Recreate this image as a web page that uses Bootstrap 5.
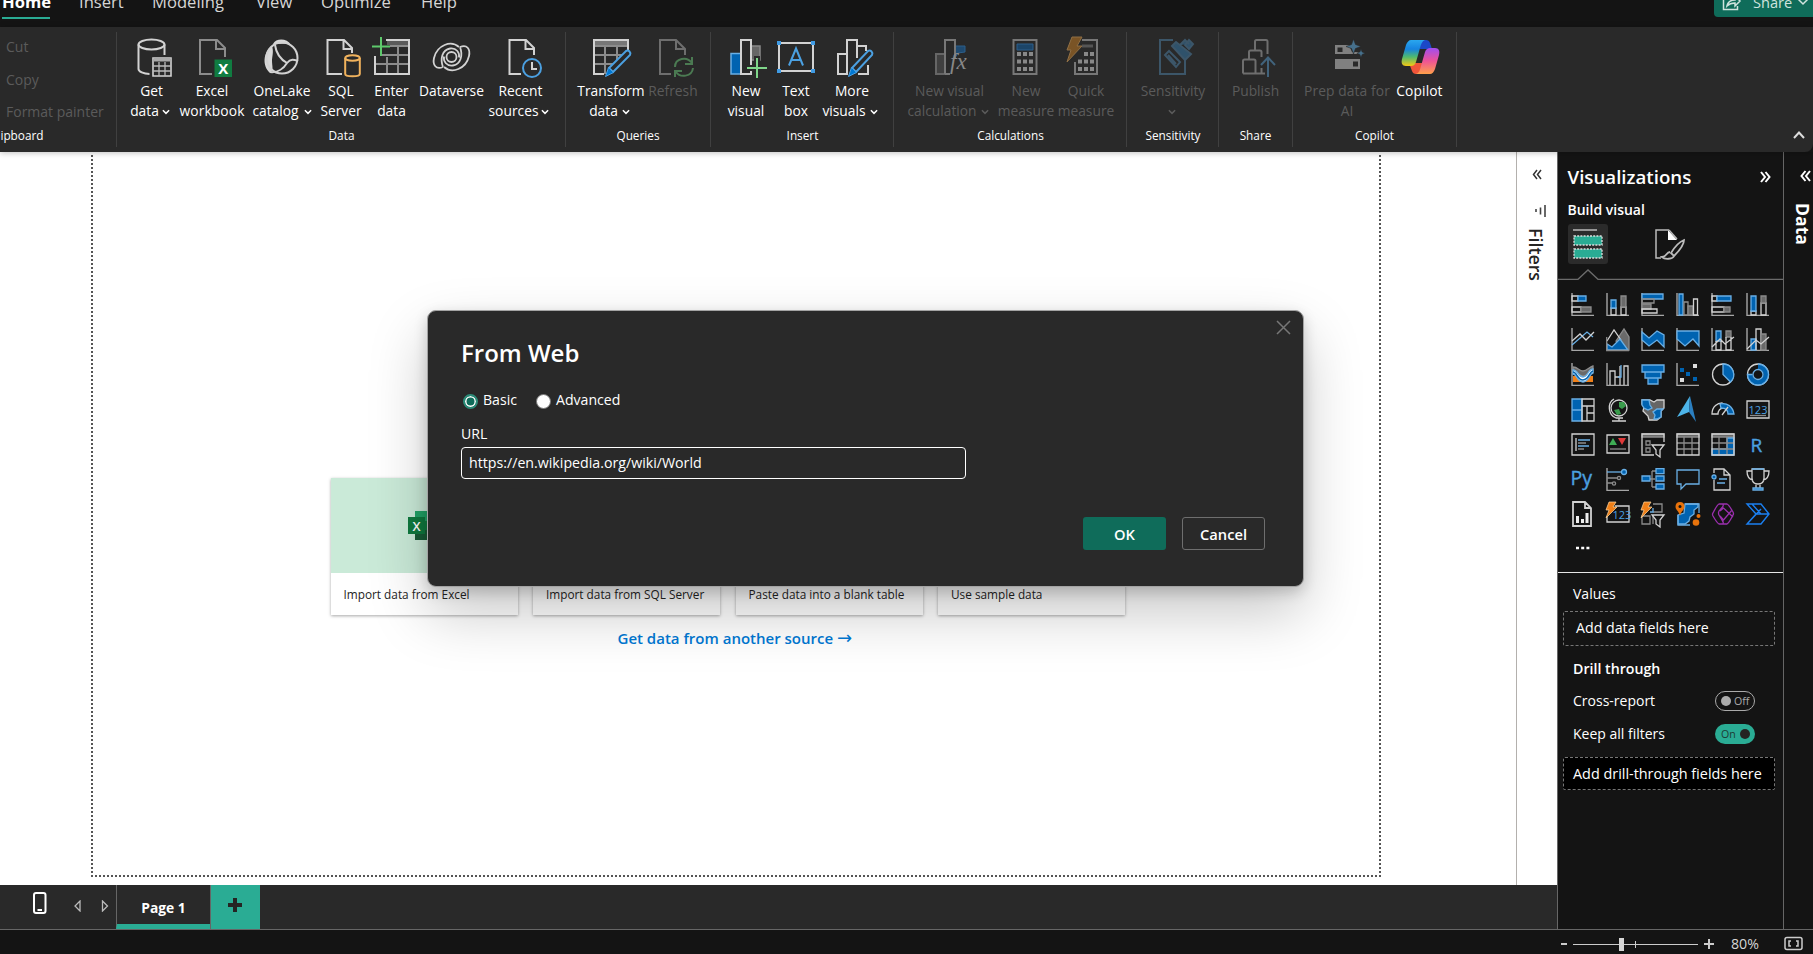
<!DOCTYPE html>
<html lang="en">
<head>
<meta charset="utf-8">
<title>Report editor</title>
<meta name="viewport" content="width=device-width, initial-scale=1">
<link href="https://cdn.jsdelivr.net/npm/bootstrap@5.3.0/dist/css/bootstrap.min.css" rel="stylesheet">
<style>
:root{--ink:#141414;--panel:#292929;--teal:#2aac94;--line:#666}
body{font-family:"Open Sans","Noto Sans",sans-serif;font-size:13.8px;line-height:20px;background:#fff;color:#fff;width:1813px;height:954px;overflow:hidden}
svg{display:block;flex:none;fill:none}
.tabstrip{height:27px;background:var(--ink);font-size:16.6px}
.tabstrip .tab{position:relative;line-height:22px;height:20px;margin-top:-9px;color:#d6d6d6}
.tabstrip .tab.active{color:#fff;font-weight:700;height:28px;border-bottom:2px solid var(--teal)}
.share{width:99px;height:17px;background:#0f6c5a;border-radius:0 0 0 4px;color:#cfe3de;font-size:14.6px;overflow:hidden}
.ribbon{height:125px;background:var(--panel);border-bottom-right-radius:8px}
.ribbon-wrap{background:var(--ink);position:relative;z-index:1;box-shadow:0 1px 6px rgba(0,0,0,.25)}
.rgroup{position:relative;padding-top:10px}
.rgroup::after{content:"";position:absolute;right:0;top:5px;width:1px;height:115px;background:#404040}
.rgroup .cap{font-size:11.8px;line-height:16px;height:26px}
.rbtn{height:90px;white-space:nowrap;text-align:center}
.rbtn svg{margin:0 auto 4px;width:40px;height:40px;overflow:visible}
.rbtn svg.chev,.chev{display:inline-block;width:8px;height:6px;margin:0 0 0 3px;stroke:currentColor;stroke-width:1.7}
.off{color:#5b5b5b}
.clip div{line-height:20px;font-size:14px}
.stage{height:733px}
.canvas-col{width:1516px;background:#fff}
.page-frame{margin-left:91px;width:1290px;height:722px;border:2px dotted #555;border-top:0;margin-top:3px}
.tile{width:187px;height:137px;background:#fff;color:#252423;font-size:11.8px;font-weight:500;box-shadow:0 1px 3px rgba(0,0,0,.35)}
.tile .art{height:95px}
.tile .ttl{padding:11px 0 0 13px;line-height:20px}
.dlg{position:absolute;left:427px;top:310px;width:877px;height:277px;background:var(--panel);border:1px solid #a3a3a3;border-radius:9px;box-shadow:0 26px 58px rgba(0,0,0,.22),0 5px 14px rgba(0,0,0,.18);padding:28px 33px;font-size:14.1px}
.dlg h1{font-size:24px;line-height:28px;font-weight:600;margin:0}
.dlg .x{position:absolute;right:12px;top:9px}
.rad{width:15px;height:15px;border-radius:50%;background:#fff;border:1px solid #767676}
.rad.on{background:#0f6c5a;border:2px solid #2b8a77;box-shadow:inset 0 0 0 1.5px #fff}
.urlbox{width:505px;height:32px;border:1.5px solid #fff;border-radius:4px;padding:5px 6px 5px 7px;font-size:14.2px}
.dbtn{width:83px;height:33px;border-radius:3px;font-weight:600;font-size:14.7px;line-height:20px;padding:0;color:#fff}
.filters{width:41px;background:#fff;border-left:1px solid #b3b0ad;color:#252423}
.vert{writing-mode:vertical-rl;font-weight:600}
.vis{width:226px;background:var(--ink);border-left:1px solid var(--line);font-size:14px}
.datap{width:30px;background:var(--ink);border-left:1px solid var(--line)}
.vgrid{display:grid;grid-template-columns:repeat(6,35px);grid-auto-rows:35px;padding:13px 0 0 12.5px}
.vgrid svg{width:24px;height:24px;overflow:visible}
.drop{width:212px;border:1px dashed #767676;border-radius:2px;margin-left:5px}
.tog{width:40px;height:20px;border-radius:10px;font-size:10.6px;line-height:18px}
.pagebar{width:1557px;height:44px;background:var(--panel)}
.bottom{background:var(--ink);border-top:1px solid var(--line);height:25px}
/* shared icon strokes */
.w{stroke:#d2d2d2;stroke-width:2}.g{stroke:#8c8c8c;stroke-width:2}.gf{fill:#6a6a6a}.b{stroke:#4ba0e1;stroke-width:2}.bf{fill:#0063b1}
.vgrid .w{stroke-width:1.3}.vgrid .g{stroke-width:1.3}.vgrid .b{stroke-width:1.3;stroke:#69afe5}
</style>
<script src="https://cdn.jsdelivr.net/npm/bootstrap@5.3.0/dist/js/bootstrap.bundle.min.js"></script>
</head>
<body>
<svg width="0" height="0" class="position-absolute">
<defs>
<symbol id="chev" viewBox="0 0 9 6"><path d="M1 1l3.5 3.5L8 1"/></symbol>
<symbol id="axes" viewBox="0 0 24 24"><path d="M1 0v22.4h22" stroke="#a6a6a6" stroke-width="1.4"/></symbol>
<linearGradient id="c1" x1="0" y1="0" x2="0" y2="1"><stop offset="0" stop-color="#2aa7ee"/><stop offset=".35" stop-color="#1683e0"/><stop offset=".65" stop-color="#4fba6f"/><stop offset="1" stop-color="#f4c914"/></linearGradient>
<linearGradient id="c2" x1="0" y1="0" x2="0" y2="1"><stop offset="0" stop-color="#a04df0"/><stop offset=".5" stop-color="#ee5396"/><stop offset="1" stop-color="#ffa04a"/></linearGradient>
</defs>
</svg>

<nav class="tabstrip d-flex align-items-start">
  <div class="tab active" style="margin-left:2px;width:48px">Home</div>
  <div class="tab" style="margin-left:29px;width:73px">Insert</div>
  <div class="tab" style="width:104px">Modeling</div>
  <div class="tab" style="width:65px">View</div>
  <div class="tab" style="width:100px">Optimize</div>
  <div class="tab">Help</div>
  <div class="share ms-auto d-flex">
    <svg width="20" height="14" style="margin-left:8px" stroke="#cfe3de" stroke-width="1.5"><path d="M6-3H1.500V9.500h14V6M5 6c1-5 4-6 8-6v-4l5 5-5 5V3C9 3 7 4 5 6z"/></svg>
    <span style="margin:-8px 0 0 11px">Share</span>
    <svg width="12" height="8" style="margin-left:5px" stroke="#cfe3de" stroke-width="1.5"><path d="M1-1l5 5 5-5"/></svg>
  </div>
</nav>

<div class="ribbon-wrap">
<div class="ribbon d-flex">
  <div class="rgroup clip" style="width:117px">
    <div class="off d-flex flex-column" style="height:90px;padding-left:6px;white-space:nowrap"><div>Cut</div><div style="margin-top:13px">Copy</div><div style="margin-top:12px">Format painter</div></div>
    <div class="cap" style="margin-left:-10px;font-size:11.8px;line-height:16px">Clipboard</div>
  </div>

  <div class="rgroup" style="width:449px">
    <div class="d-flex" style="padding-left:11px">
      <div class="rbtn" style="width:47px">
        <svg viewBox="0 0 40 40"><g class="w"><ellipse cx="19.500" cy="7.500" rx="13" ry="5"/><path d="M6.500 7.500V32c0 2.500 5 5 11 5M32.500 7.500V18"/></g><path d="M21 21h18v18H21z" stroke="#d2d2d2" stroke-width="1.600"/><path d="M21 23h18" stroke="#aaa" stroke-width="3"/><path d="M21 29h18M21 34h18M27 25v14M33 25v14" stroke="#bbb" stroke-width="1.300"/></svg>
        Get<br><span style="margin-left:-3px">data</span><svg class="chev"><use href="#chev"/></svg></div>
      <div class="rbtn" style="width:74px">
        <svg viewBox="0 0 40 40"><path class="g" d="M20 37H8V3h17l8 8v9M24 3v9h9"/><path fill="#107c41" d="M22.500 22.500H40V40H22.500z"/><text x="31.200" y="36.500" text-anchor="middle" font-size="15" font-weight="700" fill="#fff">X</text></svg>
        Excel<br><span style="letter-spacing:.1px">workbook</span></div>
      <div class="rbtn" style="width:66px">
        <svg viewBox="0 0 40 40"><path fill="#d8d8d8" d="M11 7c3-6 14-6 18 1-6-2-12-1-18-1zM10 9c-9 6-10 20-2 27 4-2 2-7 2-12s2-9 0-15z"/><circle cx="20" cy="21" r="15.500" class="w"/><path class="w" d="M13 8c1 7 5 14 12 18 4-5 8-3 11-2M8 35c8 1 14-4 17-9"/></svg>
        OneLake<br>catalog<svg class="chev" style="margin-left:5px"><use href="#chev"/></svg></div>
      <div class="rbtn" style="width:52px">
        <svg viewBox="0 0 40 40"><path class="w" d="M21 37H6.500V3H23l8 8v5M22.500 3v9H31"/><g stroke="#f0b25d" stroke-width="2"><ellipse cx="31.500" cy="21" rx="7.300" ry="2.800"/><path d="M24.200 21v16c0 3 14.600 3 14.600 0V21"/></g></svg>
        SQL<br>Server</div>
      <div class="rbtn" style="width:49px">
        <svg viewBox="0 0 40 40"><path fill="#5a5a5a" d="M15 3h22v5H15z"/><path class="g" d="M3 27h34M10 18h27M15 20v17M26 9v28M18 9h19"/><path class="w" d="M14 3h23v34H3V19"/><path stroke="#5ec96c" stroke-width="2" d="M9 0v19M0 9.500h18"/></svg>
        Enter<br>data</div>
      <div class="rbtn" style="width:71px">
        <svg viewBox="0 0 40 40"><g class="w" style="stroke-width:1.800"><circle cx="19.500" cy="20" r="5"/><path d="M27 10C19 3 5 8 2 21c-1.500 7 2 12 9 9M12 30C20 37 34 32 37 19c1.500-7-2-12-9-9M11 30c-3-8-1-17 7-18.500 6-1 10 4 9 9M28 10c3 8 1 17-7 18.500-6 1-10-4-9-9"/></g></svg>
        Dataverse</div>
      <div class="rbtn" style="width:67px">
        <svg viewBox="0 0 40 40"><path class="w" d="M20 37H8.500V3H25l8 8v7M24.500 3v9H33"/><circle cx="31" cy="31" r="9" class="b"/><path class="w" d="M31 25v7h5"/></svg>
        Recent<br><span style="margin-left:-3px">sources</span><svg class="chev"><use href="#chev"/></svg></div>
    </div>
    <div class="cap text-center">Data</div>
  </div>

  <div class="rgroup" style="width:145px">
    <div class="d-flex" style="padding-left:9px">
      <div class="rbtn" style="width:72px">
        <svg viewBox="0 0 40 40"><path fill="#777" d="M3 3h34v5H3z"/><path class="g" d="M3 9h34M3 18h28M3 27h20M14 9v28M26 9v14"/><path class="w" d="M37 14V3H3v34h10"/><path fill="#292929" stroke="#4ba0e1" stroke-width="2" d="M18 31L35 14q2-1 3.500.5t.5 3.500L22 35z"/><path fill="#0078d4" stroke="#4ba0e1" d="M14.500 39.500l3-9 5 5z"/></svg>
        Transform<br><span style="margin-left:-3px">data</span><svg class="chev" style="margin-left:4px"><use href="#chev"/></svg></div>
      <div class="rbtn off" style="width:52px">
        <svg viewBox="0 0 40 40"><path stroke="#6e6e6e" stroke-width="2" d="M18 37H7V3h16l9 9v6M23 3v9h9"/><path stroke="#4b7a52" stroke-width="2" d="M22 30c0-9 12-11 17-4M39 20v7h-7M40 31c-1 9-13 10-17 4M22 40v-6h7"/></svg>
        Refresh</div>
    </div>
    <div class="cap text-center" style="padding-right:1px">Queries</div>
  </div>

  <div class="rgroup" style="width:183px">
    <div class="d-flex" style="padding-left:7px">
      <div class="rbtn" style="width:56px">
        <svg viewBox="0 0 40 40"><path fill="#0063b1" stroke="#69afe5" stroke-width="1.500" d="M5 16.500h10V37H5z"/><path fill="#666" stroke="#888" stroke-width="1.500" d="M25 9h9v14h-9z"/><path fill="#292929" class="w" d="M15 3h10v34H15z"/><path d="M31 19v23M20 31h22" stroke="#292929" stroke-width="6"/><path stroke="#7fd68a" stroke-width="2" d="M31 21v20M21 31h20"/></svg>
        New<br>visual</div>
      <div class="rbtn" style="width:44px">
        <svg viewBox="0 0 40 40"><path class="w" d="M3 6h34v28H3z"/><path fill="#3f9be4" d="M1 4h4v4H1zM35 4h4v4h-4zM1 32h4v4H1zM35 32h4v4h-4z"/><path class="b" d="M13 28.500l7-17 7 17M15.500 23h9"/></svg>
        Text<br>box</div>
      <div class="rbtn" style="width:68px">
        <svg viewBox="0 0 40 40"><path class="w" d="M6 17h9v20H6zM15 37V3h10v18M25 9h9v5M36 28v9H26"/><path fill="#292929" stroke="#4ba0e1" stroke-width="2" d="M20 31L36 14q2-1 3.500.5t.5 3.500L24 35z"/><path fill="#0078d4" stroke="#4ba0e1" d="M16.500 39.500l3-9 5 5z"/></svg>
        More<br><span style="margin-left:-4px">visuals</span><svg class="chev" style="margin-left:4px"><use href="#chev"/></svg></div>
    </div>
    <div class="cap text-center">Insert</div>
  </div>

  <div class="rgroup" style="width:233px">
    <div class="d-flex off" style="padding-left:9px">
      <div class="rbtn" style="width:93px">
        <svg viewBox="0 0 40 40"><path fill="#404040" stroke="#666" stroke-width="2" d="M6 17h9v20H6z"/><path fill="#1f4a70" stroke="#2d5f8a" d="M25 9h10v6l-7 1-3 5z"/><path stroke="#777" stroke-width="2" d="M15 37V3h10v18M15 37h5"/><text x="20" y="32" font-family="Liberation Serif" font-style="italic" font-size="23" fill="#888">fx</text></svg>
        New visual<br><span style="margin-left:-3px">calculation</span><svg class="chev" style="margin-left:4px"><use href="#chev"/></svg></div>
      <div class="rbtn" style="width:60px">
        <svg viewBox="0 0 40 40"><path stroke="#777" stroke-width="2" d="M7.500 3h23v34h-23z"/><path fill="#1c4568" stroke="#2d5f8a" d="M11 7h16v6H11z"/><path stroke="#888" stroke-width="4" stroke-dasharray="4 2" d="M11 17h16M11 24.500h16M11 32h16"/></svg>
        New<br>measure</div>
      <div class="rbtn" style="width:60px">
        <svg viewBox="0 0 40 40"><path stroke="#777" stroke-width="2" d="M16 3h15v34H9V25"/><path stroke="#555" stroke-width="3" d="M16 9h11"/><path stroke="#888" stroke-width="4" stroke-dasharray="4 2" d="M18 17h10M12 24.500h16M12 32h16"/><path fill="#7a5426" stroke="#8f6f45" d="M6 0h10l-5 9h5L1 25l4-12H1z"/></svg>
        Quick<br>measure</div>
    </div>
    <div class="cap text-center">Calculations</div>
  </div>

  <div class="rgroup" style="width:92px">
    <div class="rbtn off" style="width:92px">
      <svg viewBox="0 0 40 40"><g stroke="#3c5669" stroke-width="2"><path d="M20 3H7v34h25V20"/><path d="M12 18l4-4 11 11-4 5zM15 18l8 9"/><path fill="#2f526b" d="M19 9l4-4 15 12-6 6zM27 8l5-5 4 4M32 8l4-5 4 4-4 5z"/></g></svg>
      Sensitivity<br><svg class="chev" style="margin:0 2px 0 0"><use href="#chev"/></svg></div>
    <div class="cap text-center">Sensitivity</div>
  </div>

  <div class="rgroup" style="width:74px">
    <div class="rbtn off" style="width:73px">
      <svg viewBox="0 0 40 40"><path stroke="#6e6e6e" stroke-width="2" d="M7 36.500V24q0-1.500 1.500-1.500H18q1.500 0 1.500 1.500v12.500M13 22v-7q0-1.500 1.500-1.500H24q1.500 0 1.500 1.500v5M19 13V4.500Q19 3 20.500 3H30q1.500 0 1.500 1.500V17M7 36.500h22M25.500 31v5"/><path stroke="#41637c" stroke-width="2" d="M32 40V21M25 28l7-7.500 7 7.500"/></svg>
      Publish</div>
    <div class="cap text-center" style="padding-right:1px">Share</div>
  </div>

  <div class="rgroup" style="width:164px">
    <div class="d-flex" style="padding-left:9px">
      <div class="rbtn off" style="width:90px">
        <svg viewBox="0 0 40 40"><path fill="#808080" d="M8 8h14l3 7h8v2H8zM8 22h25v10H8z"/><path fill="#292929" d="M10.500 10.500h5v4.500h-5zM26 24.500h5v5h-5z"/><path fill="#46708c" stroke="#292929" stroke-width=".6" d="M26.500 2l2 5.500 5.500 2-5.500 2-2 5.500-2-5.500-5.500-2 5.500-2zM34 12l1.200 3 3 1.200-3 1.200-1.200 3-1.200-3-3-1.200 3-1.200z"/></svg>
        <span style="letter-spacing:.1px">Prep data for</span><br>AI</div>
      <div class="rbtn" style="width:55px">
        <svg viewBox="0 0 40 40"><path fill="#1b48c8" d="M20 3h6q3 0 4 3l2 6H20z"/><path fill="#f0553a" d="M9 26l3 8q1 3 4 3h6l2-11z"/><path fill="url(#c1)" d="M11 3h14c-3 1-4 4-5 8l-4 14c-1 3-3 4-5 4H6c-4 0-5-3-4-7l4-14c1-3 3-5 5-5z"/><path fill="url(#c2)" d="M30 37H16c3-1 4-4 5-8l4-14c1-3 3-4 5-4h5c4 0 5 3 4 7l-4 14c-1 3-3 5-5 5z"/></svg>
        <span style="letter-spacing:.1px">Copilot</span></div>
    </div>
    <div class="cap text-center" style="padding-right:1px">Copilot</div>
  </div>
  <svg class="ms-auto align-self-end" width="12" height="8" style="margin:0 8px 13px 0" stroke="#ddd" stroke-width="2"><path d="M1 7l5-5.500L11 7"/></svg>
</div>
</div>

<div class="d-flex" style="height:777px">
 <div style="width:1557px">
  <div class="d-flex stage">
   <main class="canvas-col">
    <div class="page-frame" style="padding:322.500px 0 0 237.500px">
      <div class="d-flex" style="gap:15.500px">
        <div class="tile"><div class="art" style="background:#caead8;padding:33px 0 0 77px">
          <svg width="34" height="30"><path fill="#21a366" d="M7 0h26v10H7z"/><path fill="#107c41" d="M7 10h26v9H7z"/><path fill="#185c37" d="M7 19h26v10H7z"/><path fill="#0f7a3f" d="M0 6h17v17H0z"/><text x="8.500" y="19.500" font-size="13" font-weight="600" fill="#fff" text-anchor="middle">X</text></svg>
        </div><div class="ttl">Import data from Excel</div></div>
        <div class="tile"><div class="art" style="background:#cce4f6"></div><div class="ttl">Import data from SQL Server</div></div>
        <div class="tile"><div class="art" style="background:#eee"></div><div class="ttl">Paste data into a blank table</div></div>
        <div class="tile"><div class="art" style="background:#fbe9c8"></div><div class="ttl">Use sample data</div></div>
      </div>
      <div style="margin:13px 0 0 287px;color:#0078d4;font-size:15px;font-weight:600">Get data from another source <span style="font:400 18px/16px 'DejaVu Sans'">→</span></div>
    </div>
   </main>
   <aside class="filters">
     <svg width="11" height="12" style="margin:17px 0 0 15px" stroke="#333" stroke-width="1.500"><path d="M5 1L1.500 5.500 5 10M9 1L5.500 5.500 9 10"/></svg>
     <svg width="12" height="12" style="margin:24px 0 0 18px" stroke="#444" stroke-width="1.600"><path d="M1 4v3M5.500 2.500v7M10 0v12"/></svg>
     <div class="vert" style="font-size:17.800px;margin:11px 0 0 9px;line-height:20px">Filters</div>
   </aside>
  </div>
  <div class="pagebar d-flex">
    <svg width="14" height="24" style="margin:6px 0 0 33px" stroke="#fff" stroke-width="2"><rect x="1" y="2" width="11.500" height="20" rx="2"/><path d="M4.500 19h4.500"/></svg>
    <svg width="8" height="12" style="margin:15px 0 0 27px" stroke="#bbb" stroke-width="1.300"><path d="M6 1v10L1 6z"/></svg>
    <svg width="8" height="12" style="margin:15px 0 0 19px" stroke="#bbb" stroke-width="1.300"><path d="M1.500 1v10l5-5z"/></svg>
    <div class="text-center fw-bold" style="margin-left:7px;width:94px;border-left:1px solid #666;border-bottom:5px solid #2aac94;padding-top:13px;font-size:13.800px">Page 1</div>
    <div style="width:50px;background:#2aac94;border-left:1px solid #666;padding:13px 0 0 17px"><svg width="14" height="14" stroke="#252423" stroke-width="4"><path d="M7 0v14M0 7h14"/></svg></div>
  </div>
 </div>

 <aside class="vis">
   <div class="d-flex align-items-center" style="padding:15px 12px 0 9.500px"><span style="font-size:18.700px;font-weight:600">Visualizations</span>
     <svg class="ms-auto" width="11" height="12" stroke="#fff" stroke-width="2"><path d="M1 1l4 5-4 5M5.500 1l4 5-4 5"/></svg></div>
   <div style="padding:13px 0 0 9.500px;font-weight:600">Build visual</div>
   <div class="d-flex" style="padding:4px 0 0 10px">
     <div style="width:40px;height:40px;background:#2b2b2b;border-radius:3px"><svg width="40" height="40"><path stroke="#bbb" stroke-width="1.500" d="M5 6h24"/><path fill="#2aac94" stroke="#ddd" stroke-width="1.300" stroke-dasharray="2 1.200" d="M6 12h28v9H6zM6 25h28v9H6z"/></svg></div>
     <svg width="34" height="40" style="margin-left:46px"><path fill="#fff" d="M14 6l9 10h-9z"/><path stroke="#bbb" stroke-width="1.500" d="M7 34H2V6h13M15 6l8 9"/><path stroke="#bbb" stroke-width="1.800" d="M30 16c-5 2-10 8-13 13l3 3c5-5 10-11 10-16zM16 28c-4 0-3 5-8 5 3 3 11 2 12-1"/></svg>
   </div>
   <svg width="225" height="11" style="margin-top:5px"><path stroke="#6b6b6b" stroke-width="1.300" d="M0 10.300h20L30 1l10 9.300h185"/></svg>

   <div class="vgrid">
     <svg><use href="#axes"/><path class="w" d="M1 3h6v5H1zM1 14h9v5H1z"/><path class="b bf" d="M7 3h8v5H7z"/><path class="g gf" d="M10 14h10v5H10z"/></svg>
     <svg><use href="#axes"/><path class="w" d="M5 15h5v7H5zM15 14h5v8h-5z"/><path class="b bf" d="M5 7h5v8H5z"/><path class="g gf" d="M15 3h5v11h-5z"/></svg>
     <svg><use href="#axes"/><path class="b bf" d="M1 1h21v5H1z"/><path class="g" d="M1 6h12v4H1z"/><path class="g gf" d="M1 11h9v5H1z"/><path class="w" d="M1 16h15v4H1z"/></svg>
     <svg><use href="#axes"/><path class="b bf" d="M3 1h4v21H3z"/><path class="g" d="M8 9h4v13H8z"/><path class="g gf" d="M12 13h5v9h-5z"/><path class="w" d="M17.500 6h4v16h-4z"/></svg>
     <svg><use href="#axes"/><path class="w" d="M1 3h5v5H1zM1 14h12v5H1z"/><path class="b bf" d="M6 3h14v5H6z"/><path class="g gf" d="M13 14h6v5h-6z"/></svg>
     <svg><use href="#axes"/><path class="w" d="M5 18h5v4H5zM15 10h5v12h-5z"/><path class="b bf" d="M5 3h5v15H5z"/><path class="g gf" d="M15 3h5v7h-5z"/></svg>

     <svg><use href="#axes"/><path class="b" stroke-width="2" d="M1 17L16 4l6 5"/><path class="w" d="M1 13l8-7 6 6 8-8"/></svg>
     <svg><path class="g gf" d="M10 13l8-12 5 8v13H15z"/><path class="w" d="M1 13l7-11 7 10"/><path class="b bf" d="M1 22v-6l5 3 8-8 8 11z"/><path class="g" d="M.7 9v13.500H23"/></svg>
     <svg><use href="#axes"/><path class="b bf" d="M1 4l7 6 8-7 7 4v12l-7-7-8 6-7-6z"/></svg>
     <svg><use href="#axes"/><path class="b bf" d="M1 3h22v15l-6-7-8 7-8-7z"/></svg>
     <svg><use href="#axes"/><path class="b bf" d="M5 3h5v10H5z"/><path class="g gf" d="M15 3h5v6h-5z"/><path class="w" d="M5 13v9h5v-9M15 9v13h5V9M1 19l8-8 5 5 9-7"/></svg>
     <svg><use href="#axes"/><path class="b bf" d="M5 11h5v11H5z"/><path class="w" d="M10 22V1h5v21"/><path class="g gf" d="M15 6h5v16h-5z"/><path class="w" d="M1 21l9-9 5 4 8-7"/></svg>

     <svg><use href="#axes"/><path fill="#f08019" d="M2 13h7v6H2zM15 13h7v6h-7z"/><path class="g gf" d="M2 4c5 0 6 4 10 4s6-4 10-5v6c-4 0-6 4-10 4S7 9 2 9z"/><path class="b" fill="#fff" d="M2 11c4 0 4 8 10 8s6-8 10-9V6c-5 0-5 8-10 8S7 7 2 7z"/><path d="M2 9c4 0 4 8 10 8s6-8 10-9" stroke="#0063b1" stroke-width="1.500"/></svg>
     <svg><use href="#axes"/><path class="w" d="M4 22V8h5v14M9 8v6h5V3M14 14v8M18 22V3h4v19"/><path class="b" stroke-width="2" d="M12 14h3V2"/></svg>
     <svg><path class="b bf" d="M1 2h22v7H1zM4 9h16v6H4zM7 15h10v6H7z"/></svg>
     <svg><use href="#axes"/><path class="bf" d="M4 5h4v4H4zM10 9h4v4h-4zM17 14h4v4h-4z"/><path fill="#ddd" d="M17 1h4v4h-4zM4 15h4v4H4z"/></svg>
     <svg><circle cx="12" cy="11.500" r="10.500" class="w"/><path class="b bf" d="M12 1a10.500 10.500 0 0 1 7.500 18L12 11.500z"/></svg>
     <svg><circle cx="12" cy="11.500" r="10.500" class="w"/><circle cx="12" cy="11.500" r="8" stroke="#0063b1" stroke-width="5" stroke-dasharray="38 13" transform="rotate(-90 12 11.500)"/><circle cx="12" cy="11.500" r="5" class="b"/><path class="b" d="M12 1a10.500 10.500 0 1 1-10.500 10.500h5"/></svg>

     <svg><path class="b bf" d="M1 1h10v22H1zM1 12h10"/><path class="w" d="M11 1h12v22H11zM11 8h12M16 8v15M16 15h7"/></svg>
     <svg><circle cx="13" cy="10" r="8" class="w"/><path fill="#3a9c4c" d="M13 4h5l2 4-4 3-3-2zM8 12l5-1 2 5-4 1z"/><path class="w" d="M8 1C1 5 2 17 10 20h7M13 20v3M6 23h14"/></svg>
     <svg><path class="w" fill="#666" d="M1 2h8l4 2 3-2h7v8l-3 3v6l-4 3H8l-1-4-5-5 1-4-2-3z"/><path class="b bf" d="M1 2h7l1 5 2 3-4 2-4-2-2-3zM22 11l-2 2v6l-4 2h-3l1-4-2-3 4-3z"/></svg>
     <svg><path fill="#4db4e8" d="M14-2L1 19l12-5z"/><path fill="#2b7fc0" d="M14-2l6 26-7-10z"/></svg>
     <svg><path class="w" d="M1 16C1 8 7 5 11 5l1 5c-3 0-5 3-5 6z"/><path class="b bf" d="M9 6c7-2 13 3 14 10h-6c0-4-3-6-7-6z"/><path class="w" stroke-width="2" d="M11 17l6-8"/></svg>
     <svg><path class="w" d="M1 3h22v17H1z"/><text x="12" y="15.500" font-size="11" text-anchor="middle" fill="#4ba0e1">123</text><path class="g" d="M4 17.500h16"/></svg>

     <svg><path class="w" d="M1 1h22v21H1zM5 5v13"/><path class="b" d="M7 7h12M7 13h11" stroke-width="2"/><path class="g" d="M7 10h8M7 16h6"/></svg>
     <svg><path class="w" d="M1 2h22v18H1z"/><path fill="#3fae55" d="M3 12l4-7 4 7z"/><path fill="#e03a3a" d="M12 5h8l-4 7z"/><path class="g" d="M4 16h16"/></svg>
     <svg><path class="g gf" d="M1 1h22v3H1z"/><path class="w" d="M23 9V1H1v21h12"/><path class="g" d="M5 8h4v4H5zM5 15h4v4H5z"/><path class="w" fill="#141414" d="M11 12h12l-4 5v7l-4-3v-4z"/></svg>
     <svg><path class="g gf" d="M1 1h22v3H1z"/><path class="g" d="M1 10h22M1 16h22M8 4v18M16 4v18"/><path class="w" d="M1 1h22v21H1z"/></svg>
     <svg><path class="g gf" d="M1 1h22v3H1z"/><path class="b bf" d="M16 5h7v17H1v-6h15z"/><path class="g" d="M1 10h22M1 16h22M8 4v18M16 4v18"/><path class="w" d="M1 1h22v21H1z"/></svg>
     <svg><text x="4.500" y="18.500" font-size="19" fill="#4ba0e1" stroke="#4ba0e1" stroke-width=".4">R</text></svg>

     <svg><text x="-.5" y="17" font-size="19.500" fill="#4ba0e1" stroke="#4ba0e1" stroke-width=".4">Py</text></svg>
     <svg><use href="#axes"/><path class="b" d="M1 4h15"/><path class="g" d="M1 10h11M1 15h6"/><circle cx="18" cy="4" r="2.500" class="b bf"/><circle cx="13" cy="10" r="1.600" class="g"/><circle cx="8" cy="15.500" r="1.600" class="g"/></svg>
     <svg><path class="g" d="M8 11h6M11 3v16M11 3h4M11 19h4"/><path class="b bf" d="M1 8h8v5H1zM15 .7h8v5h-8zM15 8h8v5h-8zM15 16h8v5h-8z"/></svg>
     <svg><path class="b" d="M1 2h22v14H10l-5 5v-5H1z"/></svg>
     <svg><path class="w" d="M3 5V1h10l6 6v15H3V12M13 1v6h6"/><circle cx="3" cy="9" r="2" class="b bf"/><path class="b" d="M8 11h8M6 15h8"/></svg>
     <svg><path class="w" d="M6 1h12v9q0 6-6 6t-6-6zM6 3H1q0 8 6 9M18 3h5q0 8-6 9M10 16v4M14 16v4"/><path class="b bf" d="M6 1h12M7 20h10v2H7z"/></svg>

     <svg><path class="w" d="M2-1h12l6 6v18H2zM14-1v6h6" style="stroke-width:1.800"/><path fill="#eee" d="M5 13h3v7H5zM10 16h3v4h-3zM14.500 10h3v10h-3z"/></svg>
     <svg><path class="w" d="M9 3h14v16H1v-6"/><text x="6.500" y="15.500" font-size="11" fill="#4ba0e1">123</text><path fill="#f08019" stroke="#ffd9a0" stroke-width=".7" d="M3-1h7L7 4h4L0 15l3-8H0z"/></svg>
     <svg><path class="g" d="M12 1h9v8h-9M1 13h8v8H1zM12 12v9"/><path class="w" fill="#141414" d="M11 12h12l-4 5v7l-4-3v-4z"/><path class="b" d="M9 9h3V5"/><path fill="#f08019" stroke="#ffd9a0" stroke-width=".7" d="M3-1h7L7 4h4L0 15l3-8H0z"/></svg>
     <svg><path class="b bf" d="M9 1h13v3l-4 3v4l-4 3-1 4-4 3H2v-9l6-2z"/><path class="b" d="M23 10V1H9M2 12v10h12"/><path fill="#e8730c" d="M4-1c3 0 4.500 2 4.500 4.500C8.500 7 5 8 4 13 3 8-.5 7-.5 3.500-.5 1 1-1 4-1z"/><circle cx="4" cy="3.500" r="1.500" fill="#141414"/><circle cx="20" cy="19.500" r="3.300" fill="#e8730c"/><circle cx="22.500" cy="13" r="2" fill="#e8730c"/></svg>
     <svg stroke="#9b2fae" stroke-width="1.300"><path d="M8 1h3.500q1.500 1 0 3L8 8q-1 2 0 4l3.500 6q1.500 2 0 3H8q-2-1-6-8-1-2 0-3 4-8 6-9zM11.500 1H16q2 1 6 8 1 2 0 3-4 8-6 9h-4.500M9 8l3.500-3L22 14M9 13l3.500 4L21 7"/></svg>
     <svg stroke="#1b7ff0" stroke-width="1.400"><path d="M1 1h14l8 10-8 10H1l9-10zM6 1l9 10M10 11h12M1 21L15 6"/></svg>

     <svg><path stroke="#fff" stroke-width="2.500" stroke-dasharray="3 2.200" d="M5 10h14"/></svg>
   </div>

   <div style="border-top:1px solid #e6e6e6;margin-top:-1px;height:1px"></div>
   <div style="padding:11px 0 0 15px">Values</div>
   <div class="drop" style="height:35px;margin-top:7px;padding:6px 0 0 12px;font-size:14.200px">Add data fields here</div>
   <div style="padding:13px 0 0 15px;font-weight:600;font-size:14.200px">Drill through</div>
   <div class="d-flex align-items-center" style="padding:12px 28px 0 15px"><span>Cross-report</span>
     <div class="tog ms-auto d-flex align-items-center" style="border:1px solid #aaa;color:#aaa"><span class="rounded-circle" style="width:10px;height:10px;margin:0 3px 0 5px;background:#adadad"></span>Off</div></div>
   <div class="d-flex align-items-center" style="padding:13px 28px 0 15px"><span>Keep all filters</span>
     <div class="tog ms-auto d-flex align-items-center" style="background:#2aac94;color:#1d3b35;padding-left:6px">On<span class="rounded-circle" style="width:10px;height:10px;margin-left:4px;background:#252423"></span></div></div>
   <div class="drop" style="height:33px;margin-top:13px;padding:6px 0 0 9px;background:#000;font-size:14.400px;white-space:nowrap">Add drill-through fields here</div>
 </aside>

 <aside class="datap">
   <svg width="11" height="12" style="margin:18px 0 0 16px" stroke="#fff" stroke-width="2"><path d="M5.500 1L1.500 6l4 5M10 1L6 6l4 5"/></svg>
   <div class="vert" style="font-size:17.600px;font-weight:700;margin:21px 0 0 9px;line-height:20px">Data</div>
 </aside>
</div>

<footer class="bottom d-flex align-items-center" style="color:#d6d6d6">
  <svg width="160" height="24" style="margin-left:1557px" stroke="#ccc"><path stroke-width="2" d="M4 14h6M147 14h10M152 9v10"/><path d="M16 14.500h125M78.500 11v7"/><path fill="#d6d6d6" stroke="none" d="M62 8h5v13h-5z"/></svg>
  <span style="margin:4px 0 0 14px;width:53px;font-size:14.200px">80%</span>
  <svg width="20" height="16" style="margin-top:4px" stroke="#ccc" stroke-width="1.500"><rect x="1" y="1.500" width="17" height="12" rx="2"/><path d="M7 5H5v5h2M12 5h2v5h-2"/></svg>
</footer>

<div class="dlg" role="dialog">
  <svg class="x" width="15" height="15" stroke="#777" stroke-width="1.500"><path d="M1 1l13 13M14 1L1 14"/></svg>
  <h1>From Web</h1>
  <div class="d-flex align-items-center" style="margin:26px 0 0 2px">
    <span class="rad on"></span><span style="margin:-3px 0 0 5px;width:54px">Basic</span>
    <span class="rad" style="margin-left:-1px"></span><span style="margin:-3px 0 0 5px">Advanced</span>
  </div>
  <div style="margin-top:14px">URL</div>
  <div class="urlbox" style="margin-top:3px">https://en.wikipedia.org/wiki/World</div>
  <div class="d-flex justify-content-end" style="gap:16px;margin:38px 5px 0 0">
    <button class="btn dbtn" style="background:#0f6c5a">OK</button>
    <button class="btn dbtn" style="border:1px solid #6e6e6e">Cancel</button>
  </div>
</div>
</body>
</html>
